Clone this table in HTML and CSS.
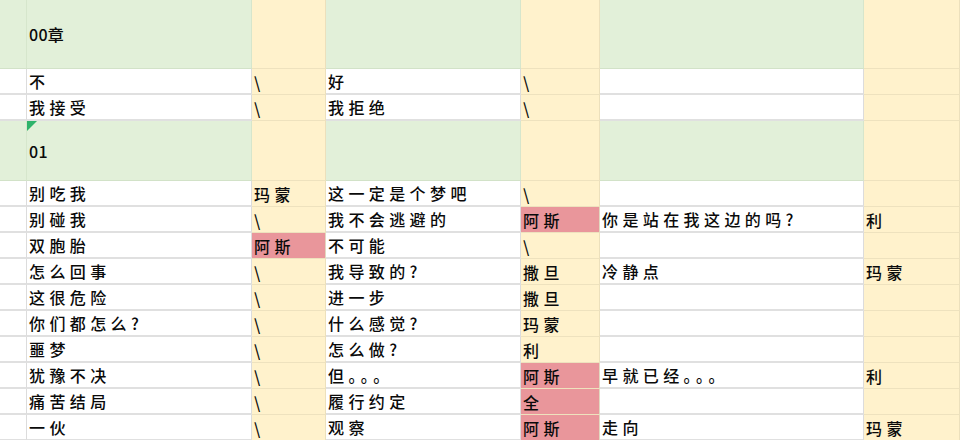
FILE: index.html
```html
<!DOCTYPE html>
<html lang="zh">
<head>
<meta charset="utf-8">
<title>Sheet</title>
<link rel="stylesheet" href="styles.css">
</head>
<body>
<div class="sheet">
  <div class="c g"></div><div class="c g"><span class="n">00</span>章</div><div class="c y"></div><div class="c g"></div><div class="c y"></div><div class="c g"></div><div class="c y"></div>

  <div class="c w"></div><div class="c w">不</div><div class="c y">\</div><div class="c w">好</div><div class="c y">\</div><div class="c w"></div><div class="c y"></div>
  <div class="c w"></div><div class="c w">我接受</div><div class="c y">\</div><div class="c w">我拒绝</div><div class="c y">\</div><div class="c w"></div><div class="c y"></div>

  <div class="c g"></div><div class="c g note"><span class="n">01</span></div><div class="c y"></div><div class="c g"></div><div class="c y"></div><div class="c g"></div><div class="c y"></div>

  <div class="c w"></div><div class="c w">别吃我</div><div class="c y">玛蒙</div><div class="c w">这一定是个梦吧</div><div class="c y">\</div><div class="c w"></div><div class="c y"></div>
  <div class="c w"></div><div class="c w">别碰我</div><div class="c y">\</div><div class="c w">我不会逃避的</div><div class="c p">阿斯</div><div class="c w">你是站在我这边的吗?</div><div class="c y">利</div>
  <div class="c w"></div><div class="c w">双胞胎</div><div class="c p">阿斯</div><div class="c w">不可能</div><div class="c y">\</div><div class="c w"></div><div class="c y"></div>
  <div class="c w"></div><div class="c w">怎么回事</div><div class="c y">\</div><div class="c w">我导致的?</div><div class="c y">撒旦</div><div class="c w">冷静点</div><div class="c y">玛蒙</div>
  <div class="c w"></div><div class="c w">这很危险</div><div class="c y">\</div><div class="c w">进一步</div><div class="c y">撒旦</div><div class="c w"></div><div class="c y"></div>
  <div class="c w"></div><div class="c w">你们都怎么?</div><div class="c y">\</div><div class="c w">什么感觉?</div><div class="c y">玛蒙</div><div class="c w"></div><div class="c y"></div>
  <div class="c w"></div><div class="c w">噩梦</div><div class="c y">\</div><div class="c w">怎么做?</div><div class="c y">利</div><div class="c w"></div><div class="c y"></div>
  <div class="c w"></div><div class="c w">犹豫不决</div><div class="c y">\</div><div class="c w">但。。。</div><div class="c p">阿斯</div><div class="c w">早就已经。。。</div><div class="c y">利</div>
  <div class="c w"></div><div class="c w">痛苦结局</div><div class="c y">\</div><div class="c w">履行约定</div><div class="c p">全</div><div class="c w"></div><div class="c y"></div>
  <div class="c w"></div><div class="c w">一伙</div><div class="c y">\</div><div class="c w">观察</div><div class="c p">阿斯</div><div class="c w">走向</div><div class="c y">玛蒙</div>
</div>
</body>
</html>
```

FILE: styles.css
```css
html, body {
  margin: 0;
  padding: 0;
  background: #ffffff;
  overflow: hidden;
}

.sheet {
  display: grid;
  grid-template-columns: 27px 225px 74px 195px 79px 264px 96px;
  grid-template-rows: 69px 26px 26px 60px repeat(10, 26px);
  width: 960px;
  font-family: "Noto Sans CJK SC", "Noto Sans", sans-serif;
  font-size: 16px;
  font-weight: 500;
  color: #0a0a0a;
  letter-spacing: 4.4px;
}

.c {
  box-sizing: border-box;
  display: flex;
  align-items: center;
  padding-left: 2px;
  white-space: nowrap;
  overflow: hidden;
  position: relative;
  line-height: 1;
  border-right: 1px solid #dcdcdc;
  border-bottom: 1px solid #dcdcdc;
}

.n {
  letter-spacing: 0.3px;
}

.w {
  background: #ffffff;
  border-bottom: 2px solid #e0e0e0;
}

.g {
  background: #e2f0d9;
  border-right-color: #d6e6cc;
  border-bottom-color: #d2e2c8;
}

.y {
  background: #fff2cc;
  border-right-color: #ece0bc;
  border-bottom-color: #eee2be;
}

.p {
  background: #e9969b;
  border-right-color: #e2d8c0;
  border-bottom-color: #eee2be;
}

.note::before {
  content: "";
  position: absolute;
  left: 0;
  top: 0;
  border-top: 10px solid #2fb36b;
  border-right: 10px solid transparent;
}
```
